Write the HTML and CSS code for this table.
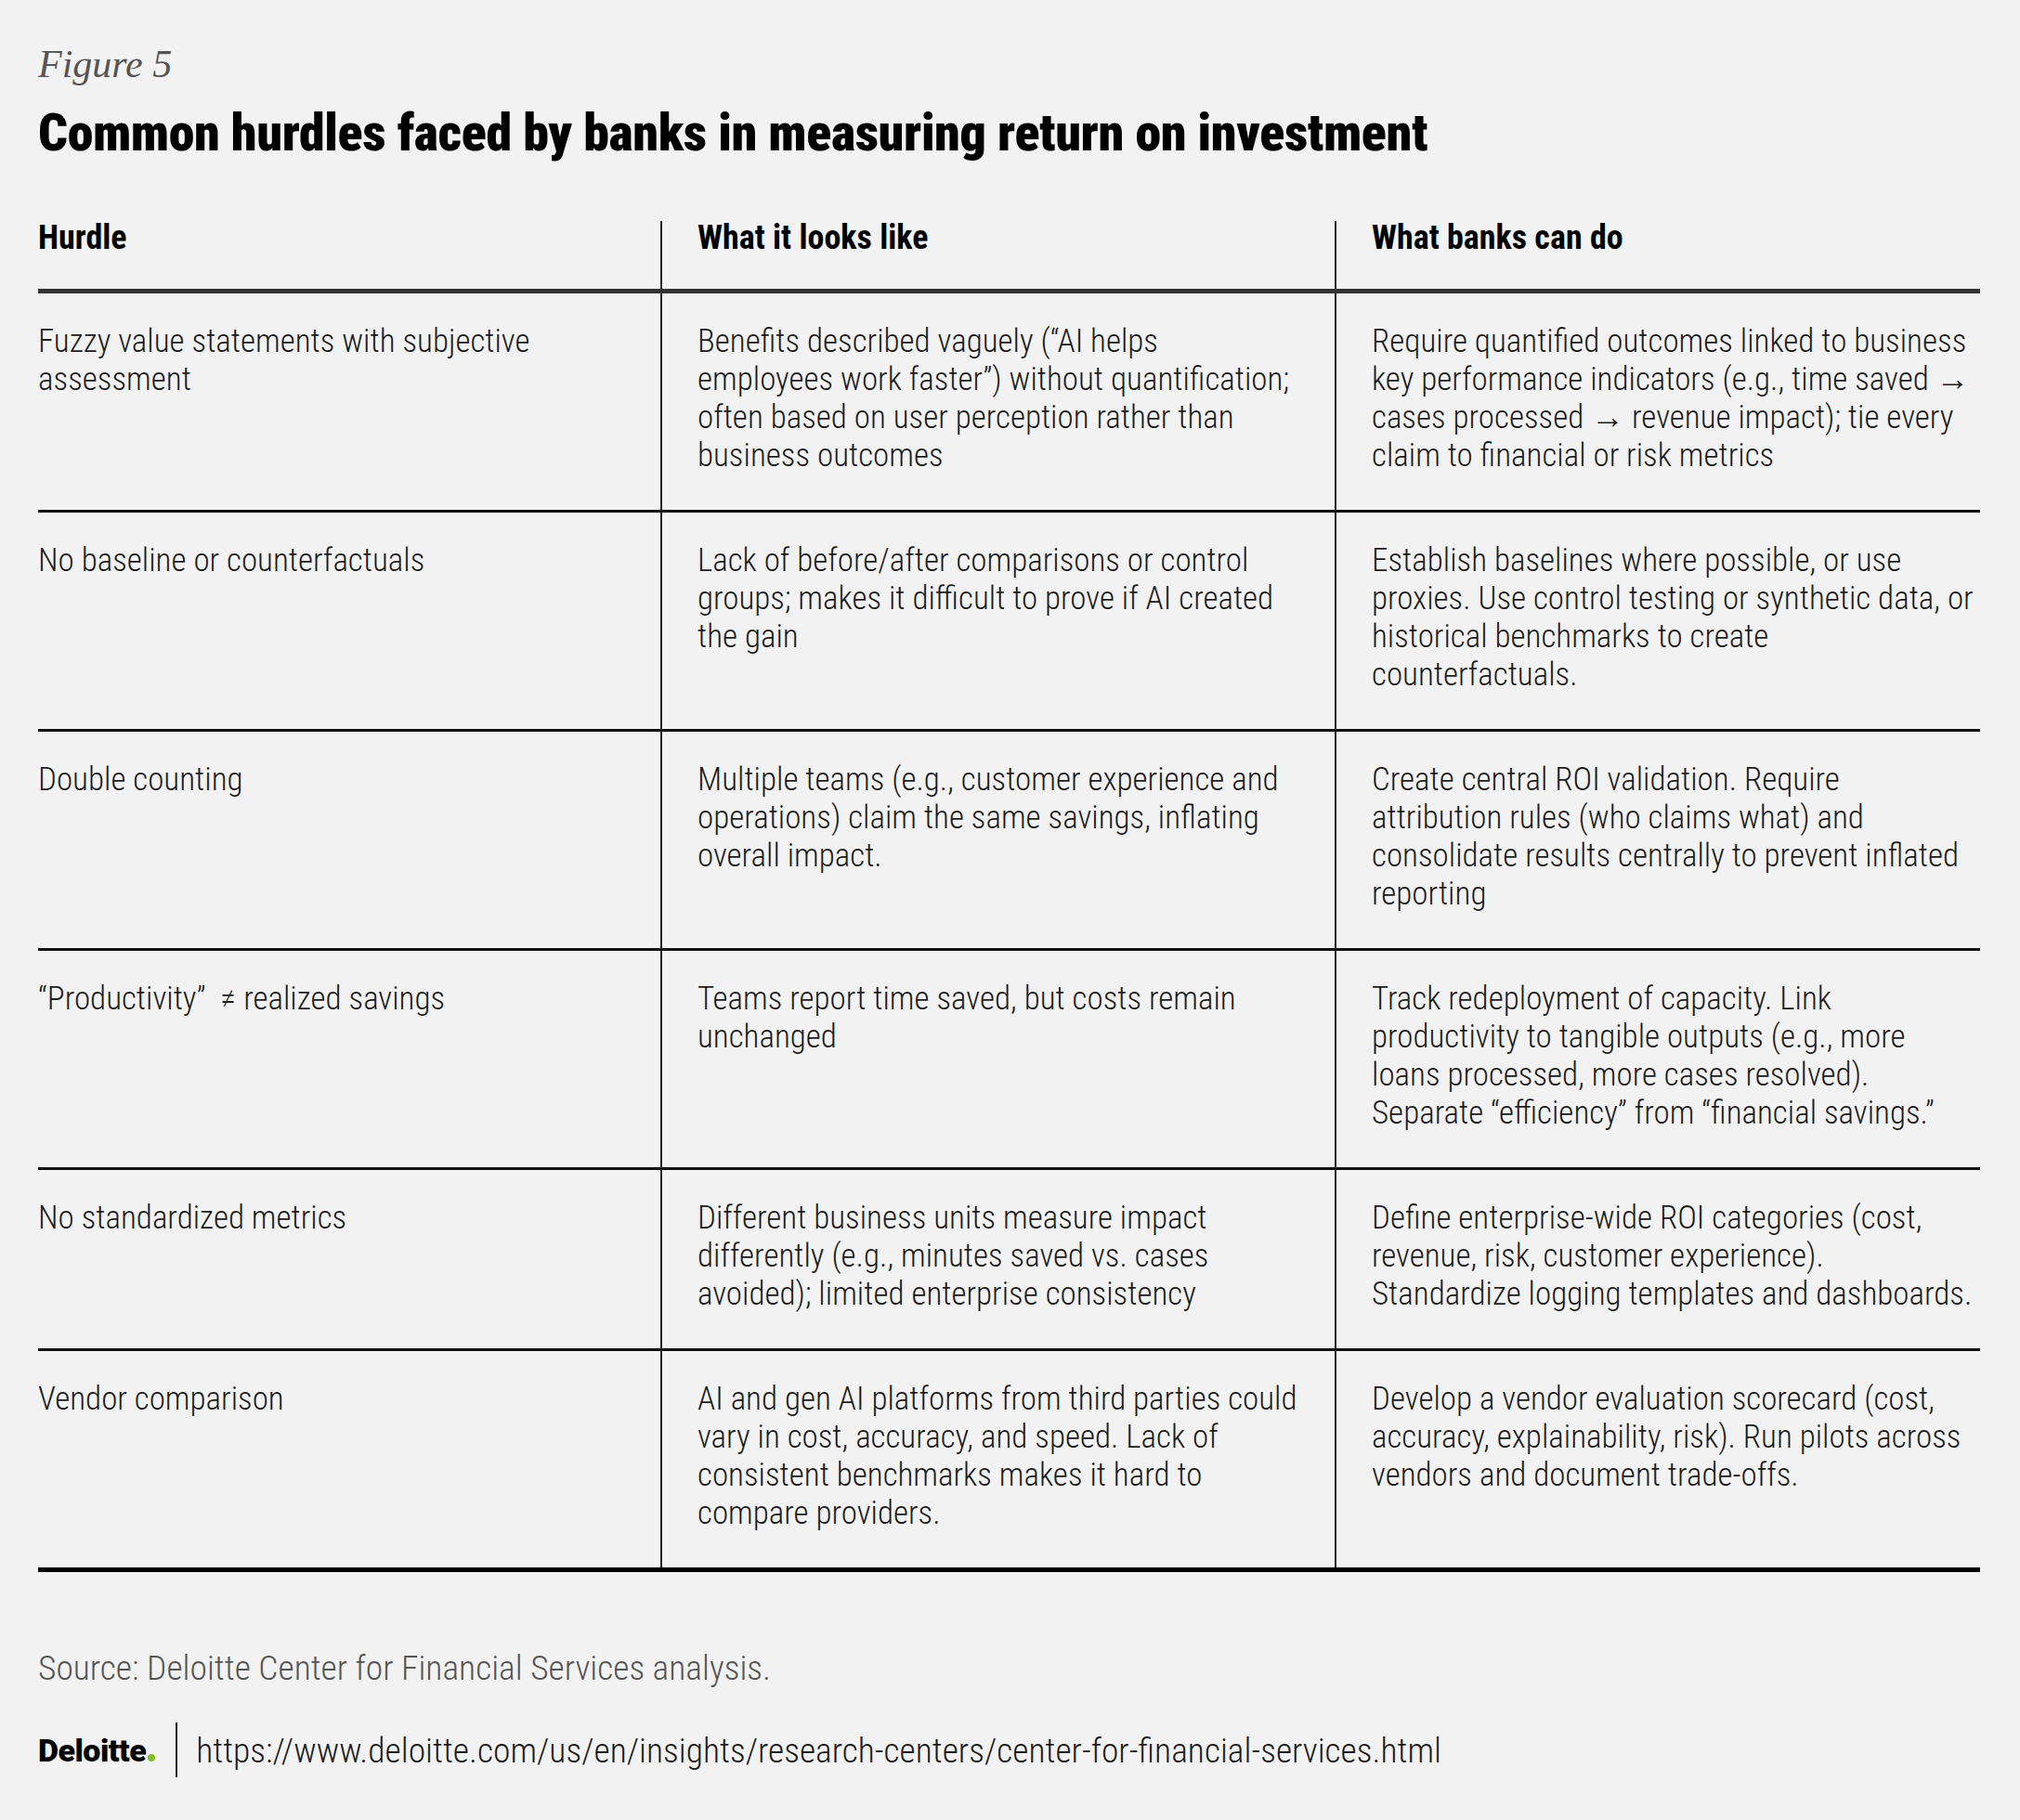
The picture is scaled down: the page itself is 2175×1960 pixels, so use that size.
FILE: index.html
```html
<!DOCTYPE html>
<html lang="en">
<head>
<meta charset="utf-8">
<title>Figure 5 – Common hurdles faced by banks in measuring return on investment</title>
<link rel="stylesheet" href="styles.css">
</head>
<body>
<main class="page">
  <p class="fig-label">Figure 5</p>
  <h1 class="title">Common hurdles faced by banks in measuring return on investment</h1>

  <div class="table">
    <div class="row head">
      <div class="cell">Hurdle</div>
      <div class="cell">What it looks like</div>
      <div class="cell">What banks can do</div>
    </div>

    <div class="row">
      <div class="cell">Fuzzy value statements with subjective<br>assessment</div>
      <div class="cell">Benefits described vaguely (&ldquo;AI helps<br>employees work faster&rdquo;) without quantification;<br>often based on user perception rather than<br>business outcomes</div>
      <div class="cell">Require quantified outcomes linked to business<br>key performance indicators (e.g., time saved <span class="arrow">&rarr;</span><br>cases processed <span class="arrow">&rarr;</span> revenue impact); tie every<br>claim to financial or risk metrics</div>
    </div>

    <div class="row">
      <div class="cell">No baseline or counterfactuals</div>
      <div class="cell">Lack of before/after comparisons or control<br>groups; makes it difficult to prove if AI created<br>the gain</div>
      <div class="cell">Establish baselines where possible, or use<br>proxies. Use control testing or synthetic data, or<br>historical benchmarks to create<br>counterfactuals.</div>
    </div>

    <div class="row">
      <div class="cell">Double counting</div>
      <div class="cell">Multiple teams (e.g., customer experience and<br>operations) claim the same savings, inflating<br>overall impact.</div>
      <div class="cell">Create central ROI validation. Require<br>attribution rules (who claims what) and<br>consolidate results centrally to prevent inflated<br>reporting</div>
    </div>

    <div class="row">
      <div class="cell">&ldquo;Productivity&rdquo;&nbsp; &ne; realized savings</div>
      <div class="cell">Teams report time saved, but costs remain<br>unchanged</div>
      <div class="cell">Track redeployment of capacity. Link<br>productivity to tangible outputs (e.g., more<br>loans processed, more cases resolved).<br>Separate &ldquo;efficiency&rdquo; from &ldquo;financial savings.&rdquo;</div>
    </div>

    <div class="row">
      <div class="cell">No standardized metrics</div>
      <div class="cell">Different business units measure impact<br>differently (e.g., minutes saved vs. cases<br>avoided); limited enterprise consistency</div>
      <div class="cell">Define enterprise-wide ROI categories (cost,<br>revenue, risk, customer experience).<br>Standardize logging templates and dashboards.</div>
    </div>

    <div class="row last">
      <div class="cell">Vendor comparison</div>
      <div class="cell">AI and gen AI platforms from third parties could<br>vary in cost, accuracy, and speed. Lack of<br>consistent benchmarks makes it hard to<br>compare providers.</div>
      <div class="cell">Develop a vendor evaluation scorecard (cost,<br>accuracy, explainability, risk). Run pilots across<br>vendors and document trade-offs.</div>
    </div>
  </div>

  <p class="source">Source: Deloitte Center for Financial Services analysis.</p>

  <footer class="footer">
    <span class="logo">Deloitte<span class="logo-dot"></span></span>
    <span class="divider"></span>
    <span class="url">https://www.deloitte.com/us/en/insights/research-centers/center-for-financial-services.html</span>
  </footer>
</main>
</body>
</html>
```
FILE: styles.css
```css
html, body {
  margin: 0;
  padding: 0;
  background: #f1f2f1;
}

body {
  font-family: "Roboto", "Liberation Sans", sans-serif;
  color: #1c1c1c;
}

.page {
  padding: 48px 0 0 41px;
  width: 2091px;
}

.fig-label {
  margin: 0;
  font-family: "Liberation Serif", serif;
  font-style: italic;
  font-size: 42px;
  line-height: 42px;
  color: #555555;
}

.title {
  margin: 26px 0 0;
  font-family: "Roboto", sans-serif;
  font-stretch: 75%;
  font-weight: 900;
  font-size: 56px;
  line-height: 55px;
  letter-spacing: -0.4px;
  color: #000;
}

.table {
  margin-top: 67px;
}

.row {
  display: grid;
  grid-template-columns: 670px 726px 1fr;
  border-bottom: 3px solid #111;
}

.row.head {
  border-bottom: 5px solid #333;
}

.row.last {
  border-bottom: 5px solid #000;
}

.cell {
  padding: 31px 0 38px;
  font-stretch: 75%;
  font-weight: 300;
  font-size: 35px;
  line-height: 41px;
  white-space: nowrap;
}

.cell + .cell {
  border-left: 2px solid #222;
  padding-left: 38px;
}

.arrow {
  font-size: 36px;
  line-height: 0;
}

.row.head .cell {
  padding-top: 0;
  padding-bottom: 37px;
  font-weight: 700;
  font-size: 36px;
  line-height: 36px;
  color: #000;
}

.source {
  margin: 86px 0 0;
  font-stretch: 75%;
  font-weight: 300;
  font-size: 37.5px;
  line-height: 34px;
  color: #555555;
}

.footer {
  margin-top: 42px;
  display: flex;
  align-items: center;
  height: 59px;
}

.logo {
  font-family: "Roboto", sans-serif;
  font-weight: 900;
  font-size: 34px;
  line-height: 34px;
  letter-spacing: -0.5px;
  color: #000;
  display: flex;
  align-items: baseline;
}

.logo-dot {
  display: inline-block;
  width: 8px;
  height: 8px;
  border-radius: 50%;
  background: #86bc25;
  margin-left: 2px;
}

.divider {
  width: 2px;
  align-self: stretch;
  background: #222;
  margin: 0 20px 0 22px;
}

.url {
  font-stretch: 75%;
  font-weight: 300;
  font-size: 37.5px;
  line-height: 38px;
  color: #1c1c1c;
}
```
